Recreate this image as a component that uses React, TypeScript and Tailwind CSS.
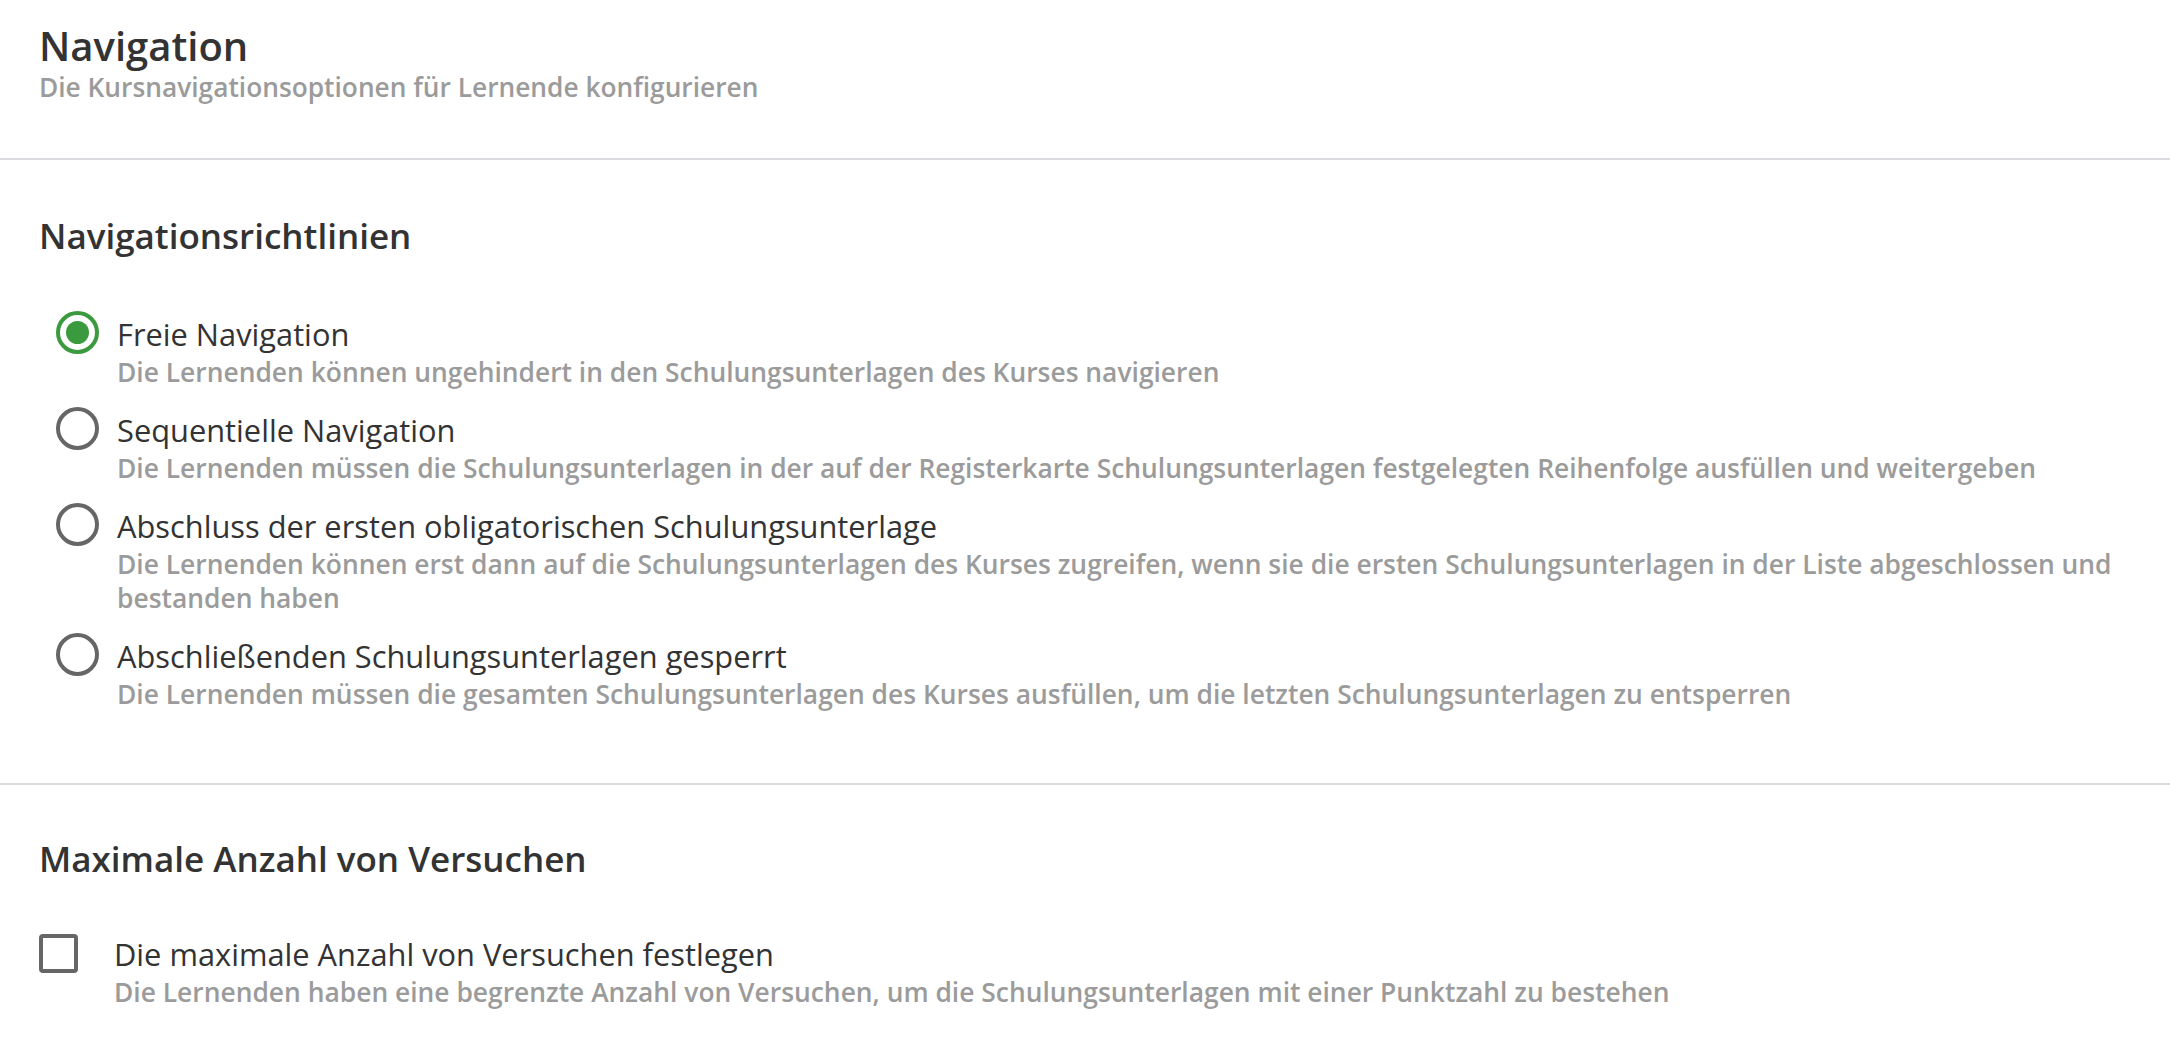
import { useState } from "react";

const OPTIONS = [
  {
    id: "free",
    label: "Freie Navigation",
    desc: "Die Lernenden können ungehindert in den Schulungsunterlagen des Kurses navigieren",
  },
  {
    id: "sequential",
    label: "Sequentielle Navigation",
    desc: "Die Lernenden müssen die Schulungsunterlagen in der auf der Registerkarte Schulungsunterlagen festgelegten Reihenfolge ausfüllen und weitergeben",
  },
  {
    id: "first",
    label: "Abschluss der ersten obligatorischen Schulungsunterlage",
    desc: "Die Lernenden können erst dann auf die Schulungsunterlagen des Kurses zugreifen, wenn sie die ersten Schulungsunterlagen in der Liste abgeschlossen und bestanden haben",
  },
  {
    id: "last",
    label: "Abschließenden Schulungsunterlagen gesperrt",
    desc: "Die Lernenden müssen die gesamten Schulungsunterlagen des Kurses ausfüllen, um die letzten Schulungsunterlagen zu entsperren",
  },
];

function Radio({ checked }: { checked: boolean }) {
  return (
    <span
      className={`mt-[-3px] ml-[17px] flex h-[43px] w-[43px] shrink-0 items-center justify-center rounded-full border-[4px] ${
        checked ? "border-[#3a9a3d]" : "border-[#666666]"
      }`}
    >
      {checked && <span className="h-[23px] w-[23px] rounded-full bg-[#3a9a3d]" />}
    </span>
  );
}

export default function App() {
  const [policy, setPolicy] = useState("free");
  const [limit, setLimit] = useState(false);

  return (
    <div className="min-h-screen bg-white font-['Open_Sans',sans-serif] text-[#333333]">
      {/* Kopfbereich */}
      <div className="border-b-2 border-[#dadadf] px-[39px] pt-[22px] pb-[54px]">
        <h1 className="text-[40px] leading-[48px] font-semibold">Navigation</h1>
        <p className="text-[26.3px] leading-[34px] font-semibold text-[#9b9b9b]">
          Die Kursnavigationsoptionen für Lernende konfigurieren
        </p>
      </div>

      {/* Navigationsrichtlinien */}
      <div className="border-b-2 border-[#dadadf] px-[39px] pt-[54px] pb-[72px]">
        <h2 className="text-[35px] leading-[44px] font-semibold">Navigationsrichtlinien</h2>
        <div className="mt-[56px] flex flex-col gap-[21px]">
          {OPTIONS.map((o) => (
            <label
              key={o.id}
              className="flex cursor-pointer items-start gap-[18px]"
              onClick={() => setPolicy(o.id)}
            >
              <Radio checked={policy === o.id} />
              <div>
                <p className="text-[30.8px] leading-[41px]">{o.label}</p>
                <p className="text-[26.4px] leading-[34px] font-semibold text-[#9b9b9b]">{o.desc}</p>
              </div>
            </label>
          ))}
        </div>
      </div>

      {/* Maximale Anzahl von Versuchen */}
      <div className="px-[39px] pt-[52px] pb-[60px]">
        <h2 className="text-[35px] leading-[44px] font-semibold">Maximale Anzahl von Versuchen</h2>
        <label
          className="mt-[53px] flex cursor-pointer items-start gap-[36px]"
          onClick={() => setLimit((v) => !v)}
        >
          <span className="flex h-[39px] w-[39px] shrink-0 items-center justify-center rounded-[4px] border-[4px] border-[#666666]">
            {limit && <span className="text-[24px] leading-none text-[#666666]">✓</span>}
          </span>
          <div>
            <p className="text-[30.8px] leading-[41px]">Die maximale Anzahl von Versuchen festlegen</p>
            <p className="text-[26.4px] leading-[34px] font-semibold text-[#9b9b9b]">
              Die Lernenden haben eine begrenzte Anzahl von Versuchen, um die Schulungsunterlagen mit einer
              Punktzahl zu bestehen
            </p>
          </div>
        </label>
      </div>
    </div>
  );
}
